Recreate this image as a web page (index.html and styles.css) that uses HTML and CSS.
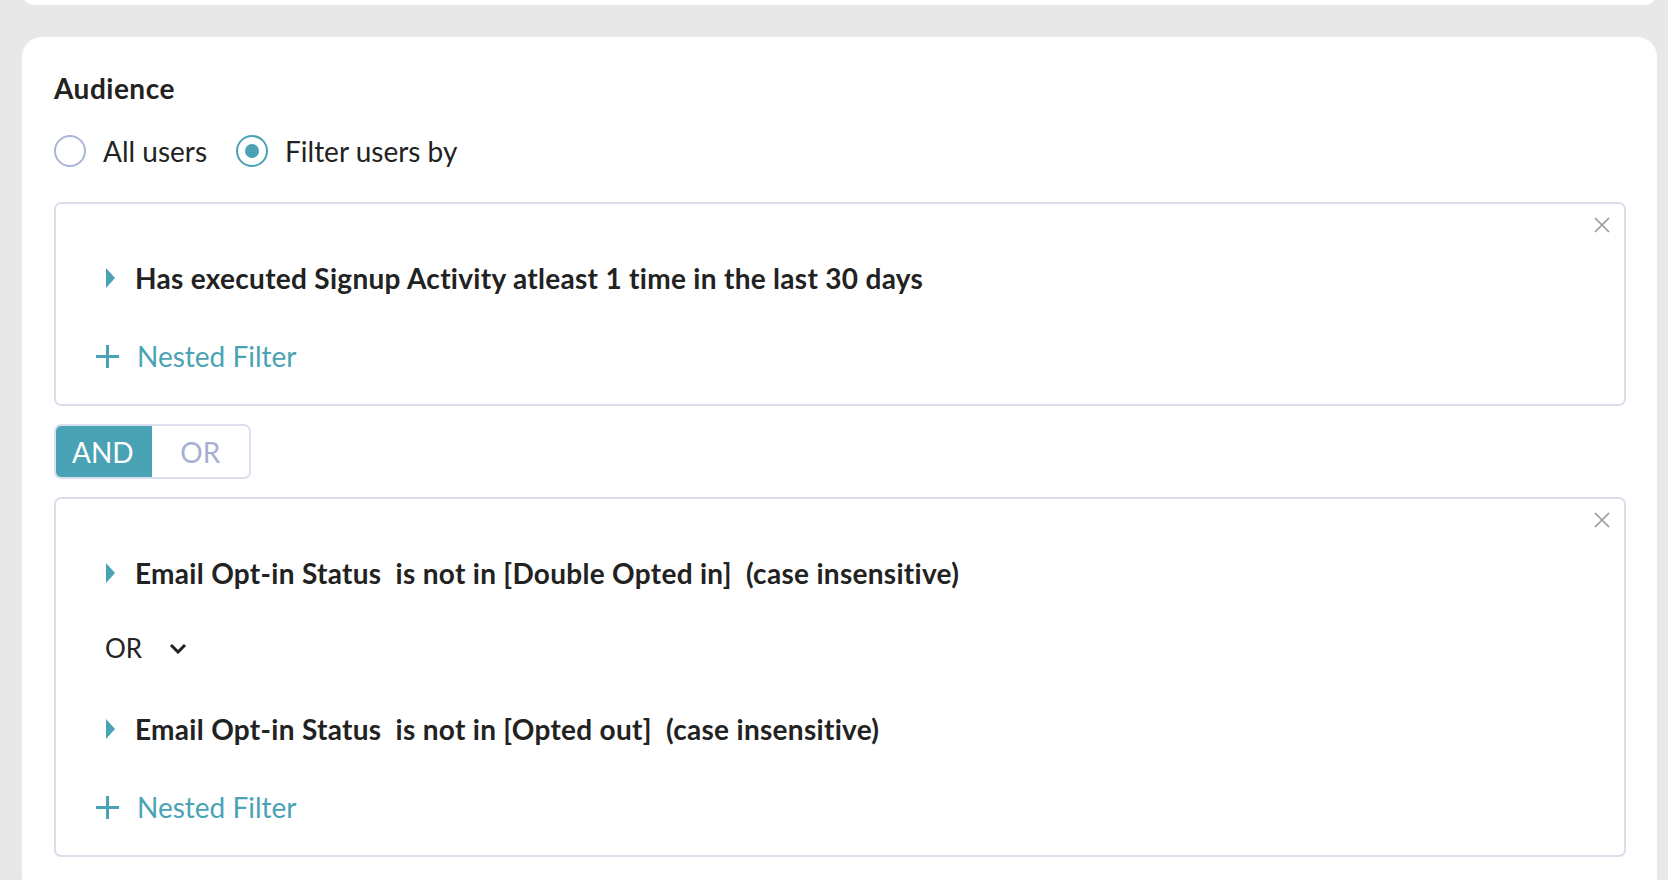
FILE: index.html
```html
<!DOCTYPE html>
<html lang="en">
	<head>
		<meta charset="UTF-8" />
		<title>Audience</title>
		<link rel="stylesheet" href="styles.css">
	</head>
	<body>
		<div class="card card-prev"></div>

		<div class="card">
			<h2 class="title">Audience</h2>

			<div class="radios">
				<label class="radio">
					<span class="radio-dot"></span>
					All users
				</label>
				<label class="radio checked">
					<span class="radio-dot"></span>
					Filter users by
				</label>
			</div>

			<div class="filter-box">
				<button class="close" type="button">
					<svg width="16" height="16" viewBox="0 0 16 16"><path d="M1 1L15 15M15 1L1 15" /></svg>
				</button>
				<div class="condition">
					<span class="caret"></span>
					Has executed Signup Activity atleast 1 time in the last 30 days
				</div>
				<div class="nested">
					<svg width="23" height="23" viewBox="0 0 23 23"><path d="M11.5 0V23M0 11.5H23" /></svg>
					Nested Filter
				</div>
			</div>

			<div class="toggle">
				<span class="toggle-item active">AND</span>
				<span class="toggle-item">OR</span>
			</div>

			<div class="filter-box">
				<button class="close" type="button">
					<svg width="16" height="16" viewBox="0 0 16 16"><path d="M1 1L15 15M15 1L1 15" /></svg>
				</button>
				<div class="condition">
					<span class="caret"></span>
					Email Opt-in Status&nbsp; is not in [Double Opted in]&nbsp; (case insensitive)
				</div>
				<div class="operator">
					OR
					<svg width="18" height="11" viewBox="0 0 18 11"><path d="M2 2L9 9L16 2" /></svg>
				</div>
				<div class="condition">
					<span class="caret"></span>
					Email Opt-in Status&nbsp; is not in [Opted out]&nbsp; (case insensitive)
				</div>
				<div class="nested">
					<svg width="23" height="23" viewBox="0 0 23 23"><path d="M11.5 0V23M0 11.5H23" /></svg>
					Nested Filter
				</div>
			</div>
		</div>
	</body>
</html>
```

FILE: styles.css
```css
* {
	box-sizing: border-box;
	margin: 0;
	padding: 0;
}

body {
	font-family: Lato, "Open Sans", sans-serif;
	background-color: #e8e8e8;
	color: #222;
	overflow: hidden;
}

.card {
	background: white;
	border-radius: 20px;
	margin: 32px 11px 0 22px;
	padding: 36px 31px 40px 32px;
}

.card-prev {
	height: 25px;
	margin-top: -20px;
	padding: 0;
}

.title {
	font-size: 28px;
	font-weight: 700;
	line-height: 30px;
	letter-spacing: 0.5px;
}

/* radio buttons */
.radios {
	display: flex;
	align-items: center;
	margin-top: 32px;
	height: 32px;
	gap: 29px;
}

.radio {
	display: flex;
	align-items: center;
	gap: 17px;
	font-size: 28px;
	cursor: pointer;
}

.radio-dot {
	width: 32px;
	height: 32px;
	border: 2px solid #abb5d8;
	border-radius: 50%;
	display: flex;
	align-items: center;
	justify-content: center;
}

.radio.checked .radio-dot {
	border-color: #4aa3b4;
}

.radio.checked .radio-dot::after {
	content: "";
	width: 14px;
	height: 14px;
	border-radius: 50%;
	background: #4aa3b4;
}

/* filter boxes */
.filter-box {
	position: relative;
	margin-top: 35px;
	border: 2px solid #dadfeb;
	border-radius: 7px;
	padding: 56px 40px 30px;
	display: flex;
	flex-direction: column;
	gap: 42px;
}

.toggle + .filter-box {
	margin-top: 18px;
}

.close {
	position: absolute;
	top: 13px;
	right: 14px;
	background: none;
	border: none;
	cursor: pointer;
	line-height: 0;
}

.close svg path {
	stroke: #9a9a9a;
	stroke-width: 1.7;
}

.condition {
	display: flex;
	align-items: center;
	height: 36px;
	padding-left: 10px;
	font-size: 28px;
	font-weight: 700;
	letter-spacing: 0.3px;
	white-space: nowrap;
}

.caret {
	width: 0;
	height: 0;
	border-left: 9px solid #4aa3b4;
	border-top: 10px solid transparent;
	border-bottom: 10px solid transparent;
	margin-right: 20px;
}

.nested {
	display: flex;
	align-items: center;
	gap: 18px;
	height: 36px;
	font-size: 28px;
	color: #4aa3b4;
	cursor: pointer;
}

.nested svg path {
	stroke: #4aa3b4;
	stroke-width: 3;
}

.operator {
	display: flex;
	align-items: center;
	gap: 27px;
	height: 36px;
	margin: -3px 0 3px;
	padding-left: 9px;
	font-size: 26px;
}

.operator svg path {
	stroke: #222;
	stroke-width: 3;
	fill: none;
}

/* AND / OR toggle */
.toggle {
	display: flex;
	margin-top: 18px;
	width: 197px;
	height: 55px;
	border: 2px solid #dce0ee;
	border-radius: 7px;
	overflow: hidden;
}

.toggle-item {
	flex: 1;
	display: flex;
	align-items: center;
	justify-content: center;
	font-size: 28px;
	color: #a6b0d2;
}

.toggle-item.active {
	background: #4aa3b4;
	color: white;
	margin: -2px 0 -2px -2px;
}
```
